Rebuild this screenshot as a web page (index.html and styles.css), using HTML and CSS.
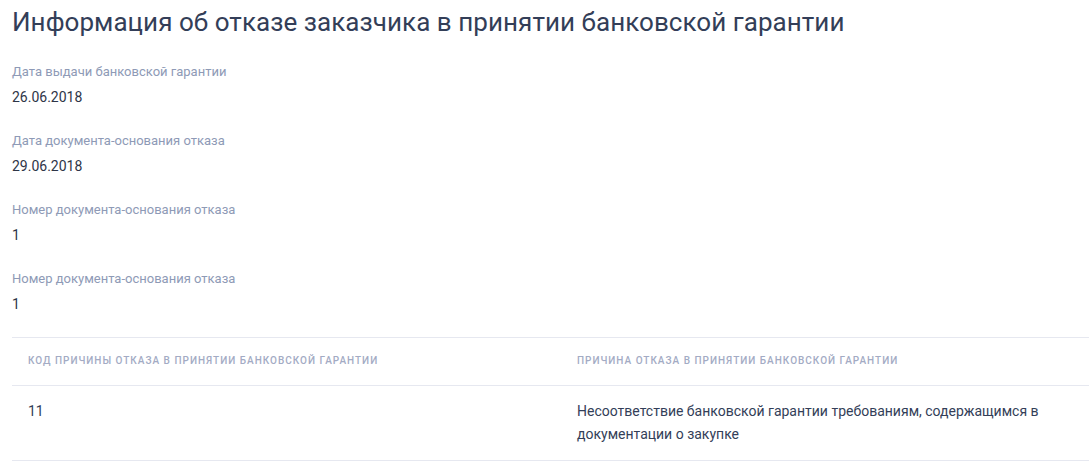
FILE: index.html
```html
<!DOCTYPE html>
<html lang="ru">
<head>
  <meta charset="UTF-8">
  <meta name="viewport" content="width=device-width, initial-scale=1.0">
  <title>Информация об отказе заказчика</title>
  <link rel="stylesheet" href="styles.css">
</head>
<body>

  <div class="page">
    <h1>Информация об отказе заказчика в принятии банковской гарантии</h1>

    <!-- Fields -->
    <div class="field">
      <div class="field-label">Дата выдачи банковской гарантии</div>
      <div class="field-value">26.06.2018</div>
    </div>
    <div class="field">
      <div class="field-label">Дата документа-основания отказа</div>
      <div class="field-value">29.06.2018</div>
    </div>
    <div class="field">
      <div class="field-label">Номер документа-основания отказа</div>
      <div class="field-value">1</div>
    </div>
    <div class="field">
      <div class="field-label">Номер документа-основания отказа</div>
      <div class="field-value">1</div>
    </div>

    <!-- Reasons table -->
    <table class="reasons">
      <thead>
        <tr>
          <th class="col-code">Код причины отказа в принятии банковской гарантии</th>
          <th>Причина отказа в принятии банковской гарантии</th>
        </tr>
      </thead>
      <tbody>
        <tr>
          <td>11</td>
          <td>Несоответствие банковской гарантии требованиям, содержащимся в документации о закупке</td>
        </tr>
      </tbody>
    </table>
  </div>

</body>
</html>
```

FILE: styles.css
```css
* {
  margin: 0;
  padding: 0;
  box-sizing: border-box;
}
body {
  font-family: Roboto, "Liberation Sans", sans-serif;
  background-color: #ffffff;
  color: #2b3346;
}
.page {
  padding: 6px 0 0 12px;
}
h1 {
  font-size: 26px;
  font-weight: 400;
  line-height: 32px;
  letter-spacing: 0.05px;
  color: #333e58;
  margin-bottom: 25px;
}
.field {
  margin-bottom: 25px;
}
.field:last-of-type {
  margin-bottom: 23px;
}
.field-label {
  font-size: 13px;
  line-height: 18px;
  color: #8e9ab6;
  margin-bottom: 6px;
}
.field-value {
  font-size: 14px;
  line-height: 20px;
  color: #2e3547;
}
.reasons {
  width: 100%;
  border-collapse: collapse;
}
.reasons th {
  text-align: left;
  font-size: 10px;
  font-weight: 500;
  letter-spacing: 1px;
  text-transform: uppercase;
  color: #a3abc4;
  line-height: 14px;
  padding: 16px 16px 17px;
  border-top: 1px solid #e6e8f0;
  border-bottom: 1px solid #e6e8f0;
}
.reasons .col-code {
  width: 549px;
}
.reasons td {
  vertical-align: top;
  font-size: 14px;
  line-height: 23px;
  color: #333e58;
  padding: 14px 16px 14px;
  border-bottom: 1px solid #e6e8f0;
}
```
